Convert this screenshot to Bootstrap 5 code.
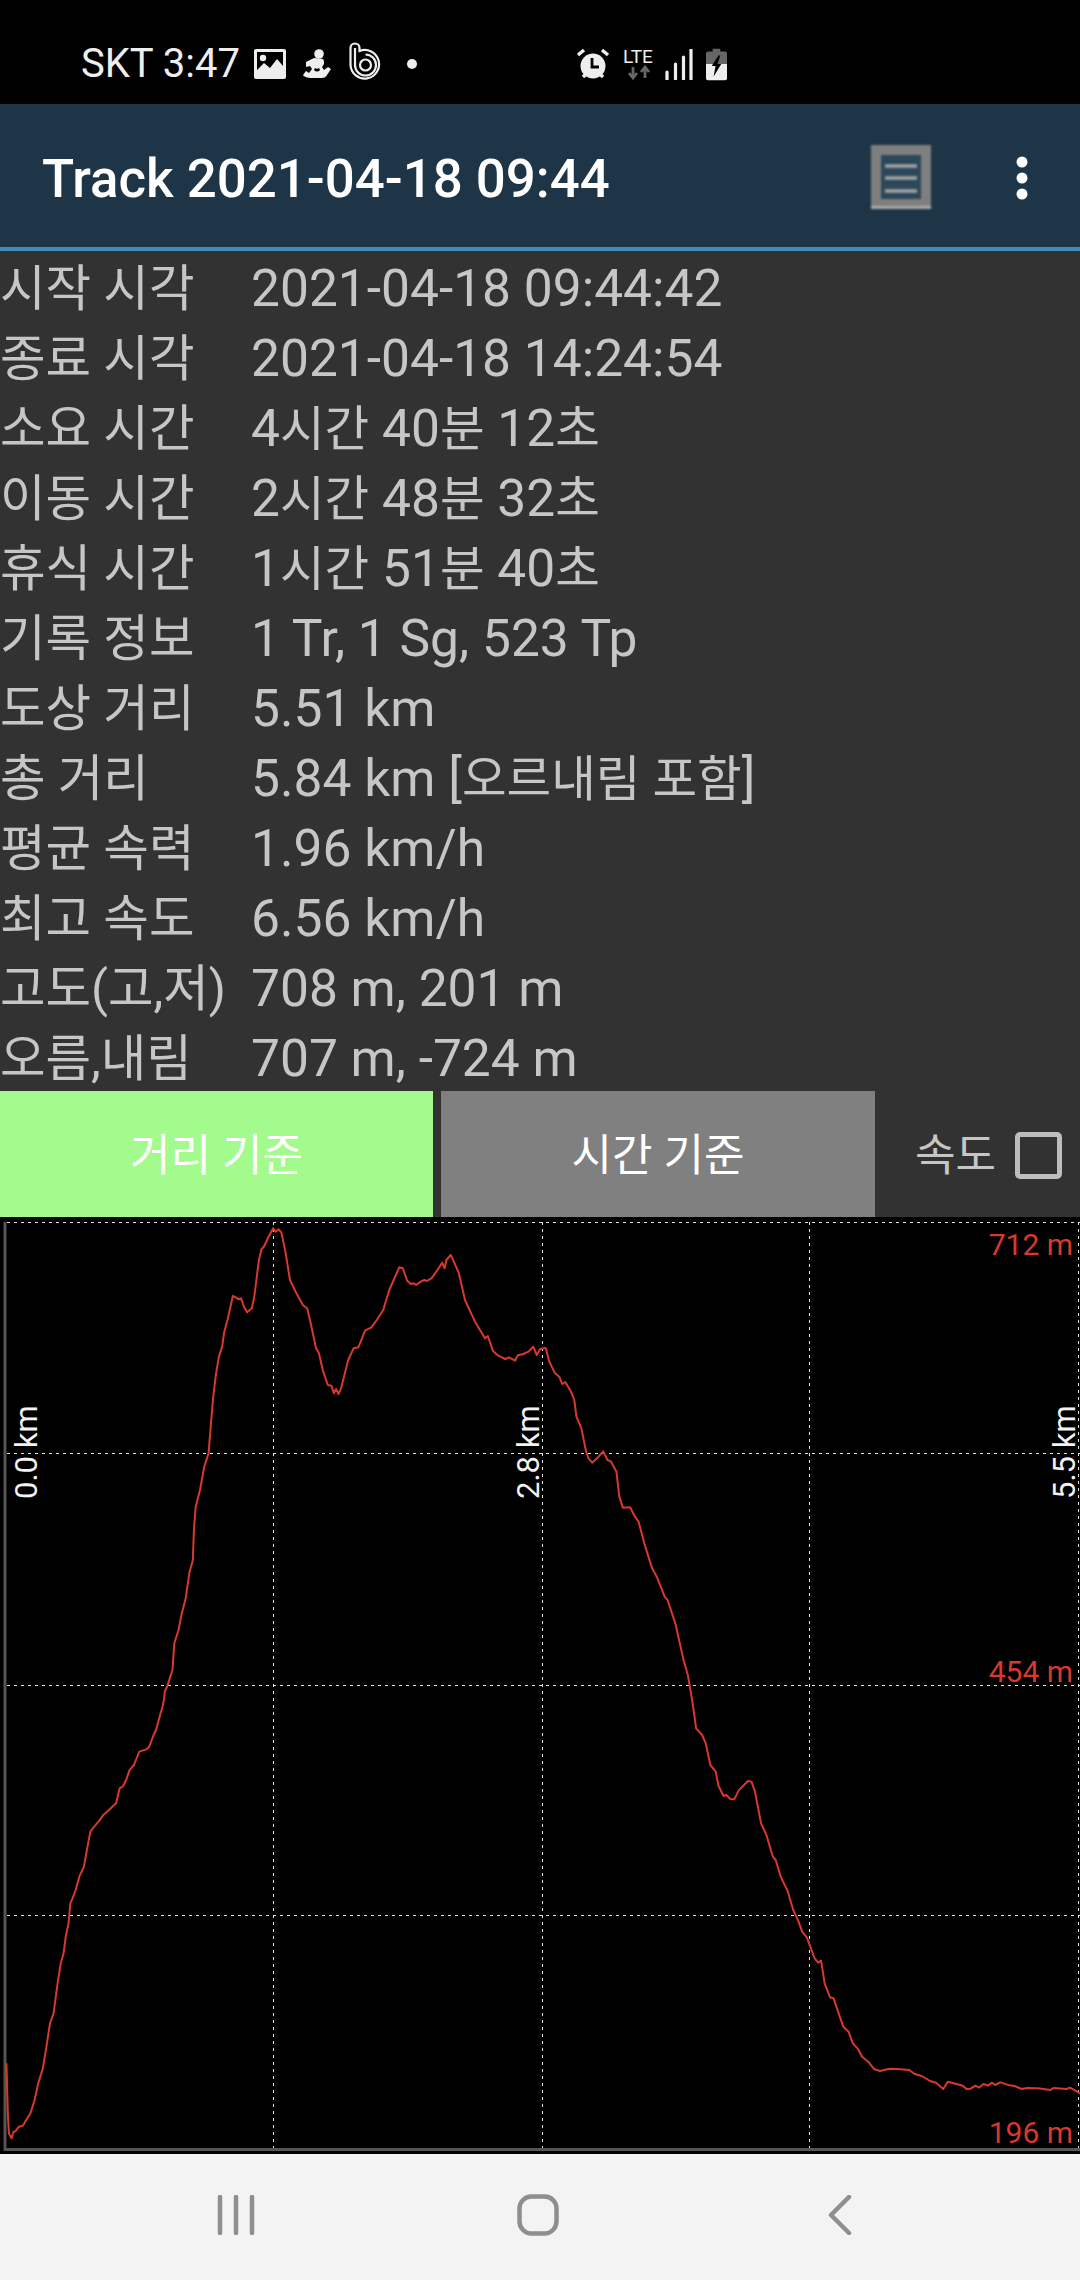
<!DOCTYPE html>
<html lang="ko">
<head>
  <title>Track 2021-04-18 09:44</title>
  <meta charset="UTF-8">
  <meta name="viewport" content="width=device-width, initial-scale=1.0">
  <link href="https://cdn.jsdelivr.net/npm/bootstrap@5.3.0/dist/css/bootstrap.min.css" rel="stylesheet">
  <style>
    html, body { background: #323232; }
    body {
      width: 1080px;
      height: 2280px;
      overflow: hidden;
      font-family: Roboto, "Noto Sans CJK KR", sans-serif;
    }
    .status-bar {
      height: 104px;
      background: #000;
      color: #eee;
      padding-left: 81px;
      padding-top: 24px;
      font-size: 40px;
      line-height: 1;
    }
    .status-bar svg { display: block; flex: none; }
    .app-bar {
      height: 147px;
      background: #1d3546;
      border-bottom: 4px solid #3f8bbb;
      padding: 5px 0 0 42px;
    }
    .app-title {
      color: #fff;
      font-size: 52.8px;
      font-weight: 500;
      line-height: 1;
      margin: 0;
      padding: 3px 0 0;
    }
    .info-list { margin: 0; height: 840px; }
    .info-row {
      height: 70px;
      padding-top: 3px;
      font-size: 51.5px;
      line-height: 70px;
      color: #c6c6c6;
      white-space: nowrap;
    }
    .info-label { width: 251px; flex: none; font-size: 49.5px; }
    .ko-part { font-size: 48.5px; }
    .mode-row { height: 126px; }
    .mode-btn {
      width: 434px;
      height: 126px;
      border: 0;
      border-radius: 0;
      color: #fff;
      font-size: 44px;
      padding: 4px 0 0;
    }
    .mode-btn.is-on, .mode-btn.is-on:hover { background: #a3fb8e; color: #fff; width: 433px; }
    .mode-btn.is-off, .mode-btn.is-off:hover { background: #808080; color: #fff; margin-left: 8px; }
    .speed-box { padding-left: 40px; gap: 20px; color: #c6c6c6; font-size: 44px; }
    .speed-label { padding-top: 4px; }
    .speed-box .speed-check[type=checkbox] {
      flex: none;
      width: 47px;
      height: 47px;
      margin: 3px 0 0 -1px;
      background-color: transparent;
      border: 5px solid #bdbdbd;
      border-radius: 5px;
    }
    .chart-box { height: 937px; background: #000; }
    .chart-box svg { display: block; }
    .grid-line { fill: none; stroke: #e4e4e4; stroke-width: 1; stroke-dasharray: 3 4; }
    .axis-line { fill: none; stroke: #555; stroke-width: 3; }
    .elev-line {
      fill: none;
      stroke: #d8392c;
      stroke-width: 2;
      stroke-linejoin: round;
      vector-effect: non-scaling-stroke;
    }
    .km-text { fill: #f2f2f2; font-size: 31px; font-family: Roboto, sans-serif; }
    .elev-text { fill: #d8392c; font-size: 30px; font-family: Roboto, sans-serif; text-anchor: end; }
    .nav-bar { height: 126px; background: #f3f3f3; padding-bottom: 4px; padding-right: 4px; }
    .nav-item-box { width: 302px; }
    .nav-item-box svg { display: block; margin: 0 auto; }
  </style>
</head>
<body>

  <!-- status bar -->
  <div class="status-bar d-flex align-items-center">
    <span class="status-text">SKT 3:47</span>
    <svg style="margin-left:14px" width="32" height="30" viewBox="0 0 32 30">
      <path fill="#eee" fill-rule="evenodd" d="M2 0h28a2 2 0 0 1 2 2v26a2 2 0 0 1-2 2H2a2 2 0 0 1-2-2V2a2 2 0 0 1 2-2zM3 3v18l7-7 6 5 7-9 6 7V3z"/>
      <circle cx="9" cy="9" r="3.2" fill="#eee"/>
    </svg>
    <svg style="margin-left:17px" width="28" height="30" viewBox="0 0 28 30">
      <circle cx="16" cy="5" r="4.800" fill="#eee"/>
      <path fill="#eee" d="M3 13l8-4 9 1c2 3 1 6-1 8l2 3 4-3 3 2-4 6c-1 2-3 3-5 3H8c-3 0-7-1-8-3l3-4 3 2 3-4-2-3-4 1z"/>
      <path fill="#000" d="M11 21c2 2 4 2 6 0l-1-2c-1 1-3 1-4 0z"/>
    </svg>
    <svg style="margin-left:18px;margin-top:-6px" width="32" height="38" viewBox="0 0 32 38">
      <g fill="none" stroke="#eee" stroke-width="2.200">
        <path d="M1.500 6a4.500 4.500 0 0 1 9 0v3a14.300 14.300 0 1 1-9 14z"/>
        <path d="M6 6v17a10.500 10.500 0 1 0 10.500-10.500"/>
        <circle cx="16.500" cy="23" r="5.500"/>
      </g>
    </svg>
    <svg class="status-dot" width="10" height="10" viewBox="0 0 10 10" style="margin-left:26px"><circle cx="5" cy="5" r="5" fill="#eee"/></svg>

    <svg style="margin-left:159px" width="34" height="32" viewBox="0 0 34 32">
      <circle cx="17" cy="18" r="12.500" fill="#eee"/>
      <path d="M16 10v9h7" fill="none" stroke="#000" stroke-width="2.800"/>
      <path d="M2 7l6-5M32 7l-6-5M7 29l3-3M27 29l-3-3" stroke="#eee" stroke-width="3.500" fill="none"/>
    </svg>
    <svg style="margin-left:13px;margin-top:-5px" width="36" height="37" viewBox="0 0 36 37">
      <text x="0" y="20" font-family="Roboto, sans-serif" font-size="19" fill="#eee">LTE</text>
      <path d="M10 24v11M6 30l4 5 4-5M22 35V24M18 29l4-5 4 5" fill="none" stroke="#666" stroke-width="2.800"/>
    </svg>
    <svg style="margin-left:6px" width="28" height="31" viewBox="0 0 28 31">
      <path d="M2 23v7M10.500 15v15M18.500 8v22M26 1v29" stroke="#eee" stroke-width="3.200" stroke-linecap="round" fill="none"/>
    </svg>
    <svg style="margin-left:13px" width="21" height="33" viewBox="0 0 22 33">
      <path fill="#666" d="M7 0h8v3h5a2 2 0 0 1 2 2v11H0V5a2 2 0 0 1 2-2h5z"/>
      <path fill="#eee" d="M0 16h22v15a2 2 0 0 1-2 2H2a2 2 0 0 1-2-2z"/>
      <path fill="#000" d="M13 7l-7 11h4l-2 11 8-13h-4l3-9z"/>
    </svg>
  </div>

  <!-- toolbar -->
  <nav class="navbar app-bar d-flex flex-nowrap align-items-center">
    <span class="navbar-brand app-title">Track 2021-04-18 09:44</span>
    <div class="d-flex align-items-center">
      <svg width="60" height="66" viewBox="0 0 60 66" style="margin-right:85px;filter:blur(1px)">
        <rect x="0" y="0" width="60" height="64" fill="#7f7f7f"/>
        <rect x="0" y="61" width="60" height="3" fill="#aaa"/>
        <rect x="10" y="10" width="40" height="44" fill="#2c4759"/>
        <path d="M14 21h32M14 33h32M14 46h32" stroke="#a5a5a5" stroke-width="3.500"/>
      </svg>
      <svg width="12" height="44" viewBox="0 0 12 44" style="margin-right:52px">
        <circle cx="6" cy="6" r="5.500" fill="#fff"/>
        <circle cx="6" cy="22" r="5.500" fill="#fff"/>
        <circle cx="6" cy="38" r="5.500" fill="#fff"/>
      </svg>
    </div>
  </nav>

  <!-- track info -->
  <div class="info-list">
    <div class="info-row d-flex"><span class="info-label">시작 시각</span><span>2021-04-18 09:44:42</span></div>
    <div class="info-row d-flex"><span class="info-label">종료 시각</span><span>2021-04-18 14:24:54</span></div>
    <div class="info-row d-flex"><span class="info-label">소요 시간</span><span>4<span class="ko-part">시간</span> 40<span class="ko-part">분</span> 12<span class="ko-part">초</span></span></div>
    <div class="info-row d-flex"><span class="info-label">이동 시간</span><span>2<span class="ko-part">시간</span> 48<span class="ko-part">분</span> 32<span class="ko-part">초</span></span></div>
    <div class="info-row d-flex"><span class="info-label">휴식 시간</span><span>1<span class="ko-part">시간</span> 51<span class="ko-part">분</span> 40<span class="ko-part">초</span></span></div>
    <div class="info-row d-flex"><span class="info-label">기록 정보</span><span>1 Tr, 1 Sg, 523 Tp</span></div>
    <div class="info-row d-flex"><span class="info-label">도상 거리</span><span>5.51 km</span></div>
    <div class="info-row d-flex"><span class="info-label">총 거리</span><span>5.84 km [<span class="ko-part">오르내림 포함</span>]</span></div>
    <div class="info-row d-flex"><span class="info-label">평균 속력</span><span>1.96 km/h</span></div>
    <div class="info-row d-flex"><span class="info-label">최고 속도</span><span>6.56 km/h</span></div>
    <div class="info-row d-flex"><span class="info-label">고도(고,저)</span><span>708 m, 201 m</span></div>
    <div class="info-row d-flex"><span class="info-label">오름,내림</span><span>707 m, -724 m</span></div>
  </div>

  <!-- mode buttons -->
  <div class="mode-row d-flex">
    <button type="button" class="btn mode-btn is-on">거리 기준</button>
    <button type="button" class="btn mode-btn is-off">시간 기준</button>
    <label class="speed-box d-flex align-items-center"><span class="speed-label">속도</span> <input class="form-check-input speed-check" type="checkbox"></label>
  </div>

  <!-- elevation chart, viewBox is in screen coordinates -->
  <div class="chart-box">
    <svg width="1080" height="937" viewBox="0 1217 1080 937">
      <path class="grid-line" d="M7 1222.500H1080M7 1453.500H1080M7 1685.500H1080M7 1915.500H1080"/>
      <path class="grid-line" d="M273.500 1222V2148M542.500 1222V2148M809.500 1222V2148M1078.500 1222V2148"/>
      <path class="axis-line" d="M5 1222V2149.500H1080"/>

      <!-- traced in pieces from the picture -->
      <g transform="translate(0 1700) scale(.35714 .33333)">
        <polyline class="elev-line" points="18,1090 22,1240 25,1300 32,1315 38,1296 44,1293 52,1281 64,1277 72,1262 85,1240 97,1200 107,1150 120,1105 130,1040 140,970 150,940 160,860 170,790 178,760 184,710 192,670 197,610 203,595 212,570 222,530 235,500 245,440 253,395 262,382 278,362 290,344 305,330 325,310 335,265 345,258 355,235 362,212 375,195 390,155 410,148 418,140 430,105 437,90 447,50 455,20 459,0"/>
      </g>
      <g transform="translate(0 1210) scale(.35714 .33333)">
        <polyline class="elev-line" points="459,1470 462,1442 468,1430 483,1380 488,1300 500,1260 508,1215 520,1165 530,1090 540,1050 543,960 548,890 560,840 572,770 584,730 590,650 597,560 605,490 613,440 622,410 628,365 637,330 652,258 660,262 668,268 675,265 683,290 692,307 705,295 712,260 725,150 732,118 740,108 752,80 765,55 772,65 780,58 788,68 800,130 812,210 830,250 848,285 860,295 870,340 885,415 893,430 905,485 918,525 928,527 935,550 941,537 948,552 955,535 975,450 990,415 1003,412 1010,395 1022,362 1040,352 1055,330 1073,300 1090,240 1118,172 1128,175 1140,212 1150,222 1158,220 1165,225 1178,215 1188,210 1195,213 1208,205 1225,180 1238,158 1245,175 1250,150 1262,135 1273,160 1285,190 1302,270 1330,335 1358,385 1366,378 1380,422 1395,437 1415,447 1425,442 1442,452 1450,436 1465,432 1480,425 1493,410 1503,435 1512,418 1528,413"/>
      </g>
      <g transform="translate(520 1210) scale(.35714 .33333)">
        <polyline class="elev-line" points="72,413 82,455 97,488 110,500 118,522 127,516 145,550 152,570 158,620 172,655 185,725 192,745 202,758 220,740 233,724 245,750 255,755 270,785 278,860 288,893 308,892 322,920 332,935 348,1000 370,1075 385,1105 405,1160 413,1170 435,1240 458,1350 470,1395 478,1445 482,1470"/>
      </g>
      <g transform="translate(520 1700) scale(.35714 .33333)">
        <polyline class="elev-line" points="482,0 490,60 493,85 510,105 520,130 533,195 548,215 556,258 570,288 578,285 590,298 600,298 612,272 638,243 648,245 658,275 675,370 690,405 708,470 716,480 730,530 750,575 765,630 780,665 790,695 803,712 825,775 835,788 843,782 853,850 868,892 878,895 905,980 920,995 932,1030 945,1045 958,1070 975,1085 992,1108 1008,1113 1035,1106 1055,1107 1090,1110 1105,1122 1125,1128 1148,1143 1165,1148 1185,1167 1198,1145 1225,1153 1240,1157 1250,1167 1262,1166 1275,1157 1285,1163 1298,1152 1310,1157 1322,1148 1330,1155 1345,1147 1370,1156 1385,1158 1405,1167 1420,1164 1450,1165 1485,1170 1495,1164 1530,1167 1540,1163 1568,1180"/>
      </g>

      <text class="km-text" transform="translate(37 1499) rotate(-90)">0.0 km</text>
      <text class="km-text" transform="translate(539 1499) rotate(-90)">2.8 km</text>
      <text class="km-text" transform="translate(1075 1499) rotate(-90)">5.5 km</text>

      <text class="elev-text" x="1073" y="1255">712 m</text>
      <text class="elev-text" x="1073" y="1682">454 m</text>
      <text class="elev-text" x="1073" y="2143">196 m</text>
    </svg>
  </div>

  <!-- android nav -->
  <div class="nav-bar d-flex justify-content-center align-items-center">
    <div class="nav-item-box">
      <svg width="38" height="40" viewBox="0 0 38 40">
        <path d="M3 2v36M19 2v36M35 2v36" stroke="#8e8e8e" stroke-width="4.500" stroke-linecap="round" fill="none"/>
      </svg>
    </div>
    <div class="nav-item-box">
      <svg width="42" height="42" viewBox="0 0 42 42">
        <rect x="2.500" y="2.500" width="37" height="37" rx="12" fill="none" stroke="#8e8e8e" stroke-width="4.500"/>
      </svg>
    </div>
    <div class="nav-item-box">
      <svg width="24" height="40" viewBox="0 0 24 40">
        <path d="M21 2L3 20l18 18" stroke="#8e8e8e" stroke-width="4.500" stroke-linecap="round" stroke-linejoin="round" fill="none"/>
      </svg>
    </div>
  </div>

  <script src="https://cdn.jsdelivr.net/npm/bootstrap@5.3.0/dist/js/bootstrap.bundle.min.js"></script>
</body>
</html>
